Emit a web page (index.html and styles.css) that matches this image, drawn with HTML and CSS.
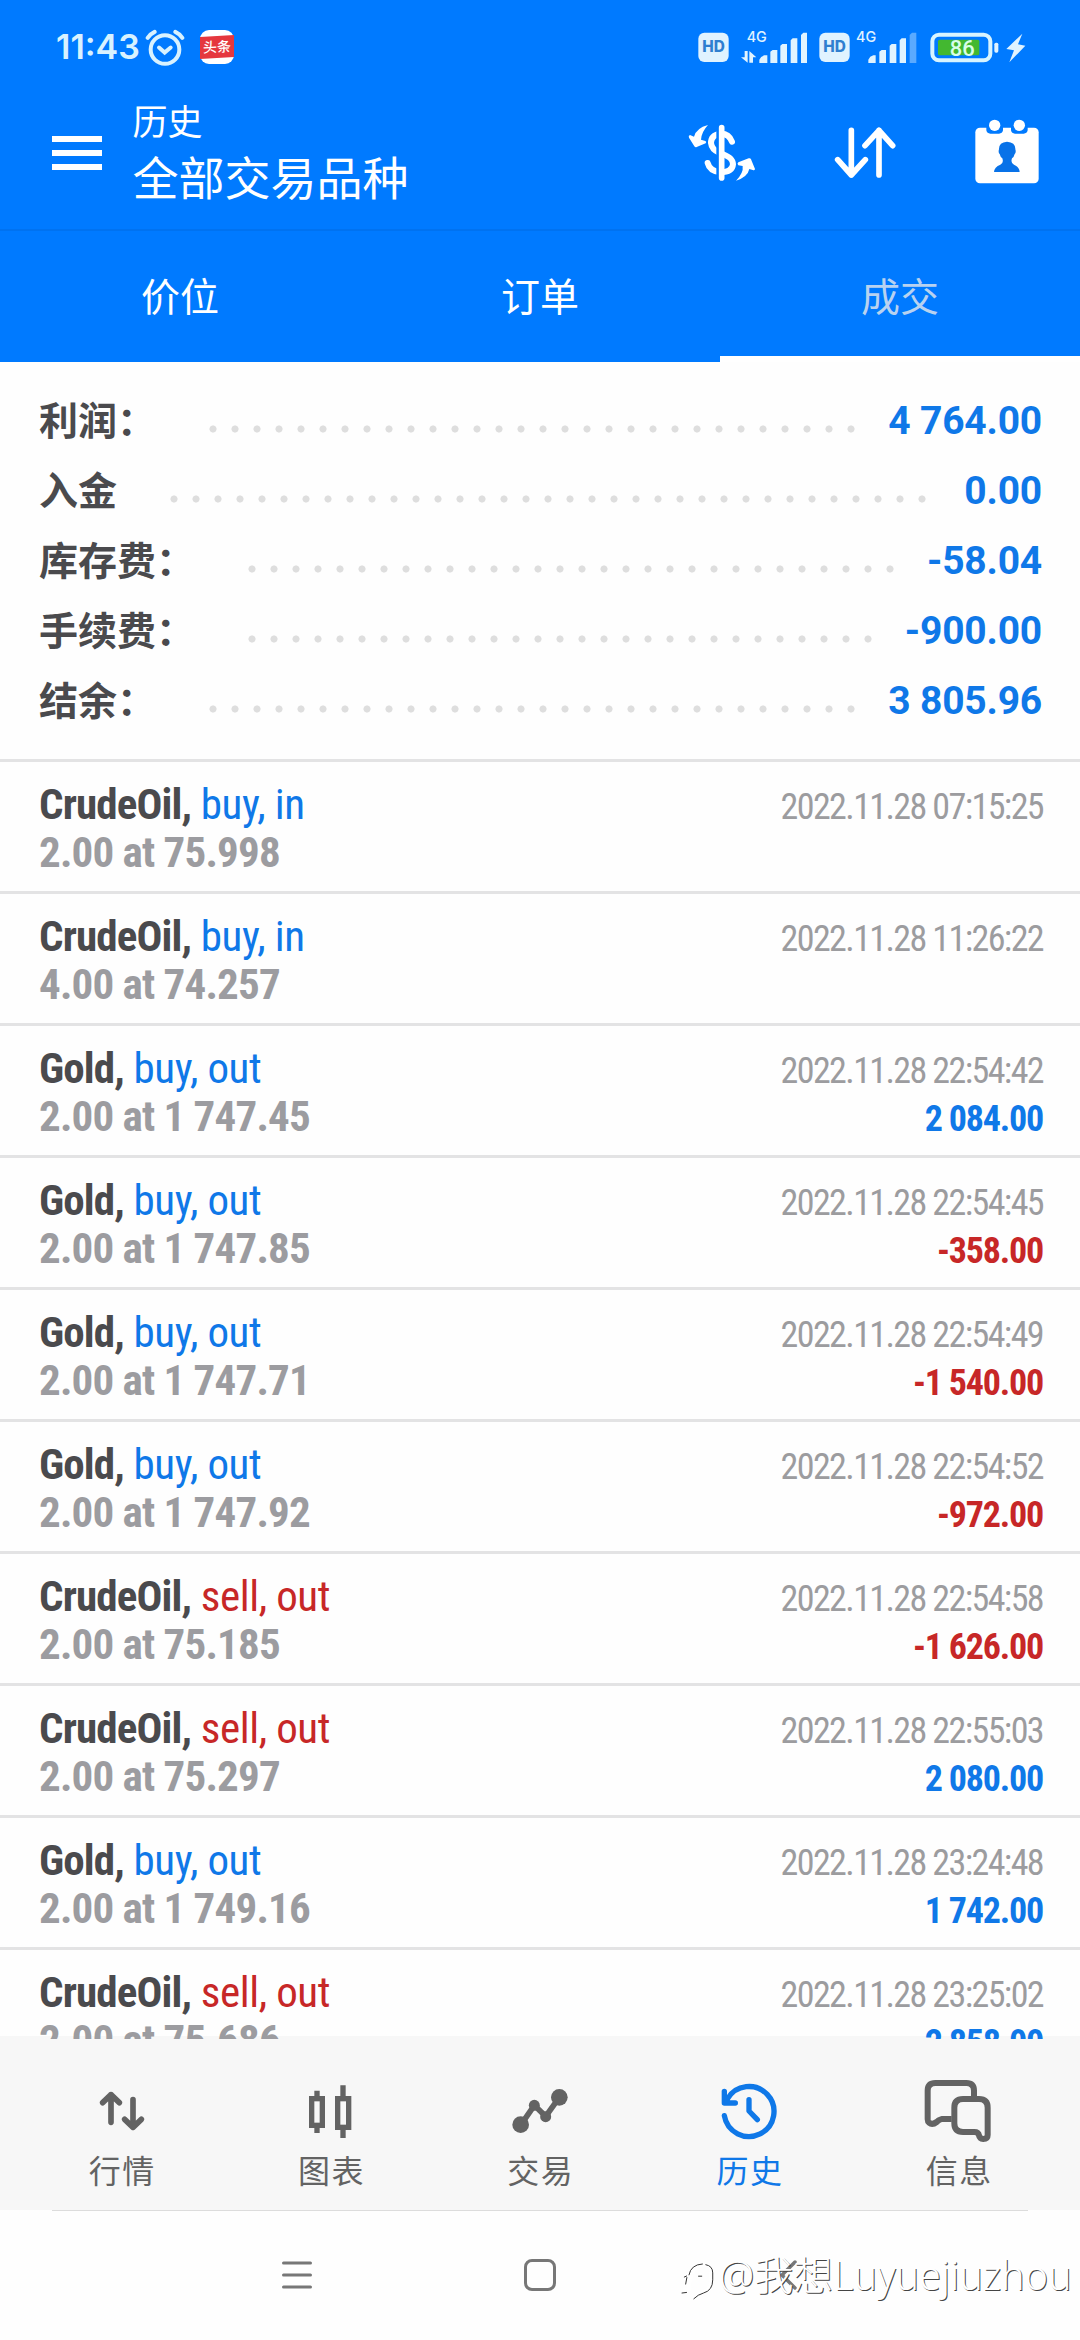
FILE: index.html
```html
<!DOCTYPE html>
<html lang="zh-CN">
<head>
<meta charset="utf-8">
<title>历史</title>
<link rel="stylesheet" href="styles.css">
</head>
<body>
<div class="screen">
  <header class="header">
    <div class="status">
      <div class="status-left">
        <span class="clock">11:43</span>
        <svg class="alarm" viewBox="0 0 120 110">
          <g fill="none" stroke="#d8f2ff" stroke-width="12" stroke-linecap="round">
            <circle cx="60" cy="61" r="43"/>
            <path d="M42 55L59 70L77 55"/>
            <path d="M8 26Q16 14 29 8M112 26Q104 14 91 8"/>
          </g>
        </svg>
        <span class="news"><span class="news-band">头条</span></span>
      </div>
      <svg class="status-right" viewBox="170 80 990 120">
        <g fill="#e0f3ff">
          <rect x="174" y="97" width="91" height="88" rx="18"/>
          <rect x="537" y="97" width="91" height="88" rx="18"/>
          <text class="net" x="319" y="125">4G</text>
          <text class="net" x="647" y="125">4G</text>
          <path d="M313 152h9v35L302 171h11zM327 187v-35l21 19h-10v16z"/>
          <path d="M357 188v-10q4-10 15-13h9v23zM390 188v-34l7-5h14v39zM420 188v-52l6-5h14v57zM451 188v-68l6-6h14v74zM482 188v-84l7-7h11v91z"/>
          <path d="M684 188v-10q4-10 15-13h7v23zM717 188v-34l7-5h13v39zM748 188v-52l6-5h14v57zM778 188v-68l6-6h13v74z"/>
          <path opacity=".4" d="M808 188v-84l7-7h13v91z"/>
          <rect x="1062" y="127" width="12" height="30" rx="5"/>
          <path d="M1146 100L1098 146L1121 150L1107 186L1155 136L1133 132z"/>
        </g>
        <text class="hd" x="219.500" y="156">HD</text>
        <text class="hd" x="582.500" y="156">HD</text>
        <rect x="876" y="103" width="174" height="77" rx="20" fill="none" stroke="#d8f4ff" stroke-width="12"/>
        <rect x="893" y="118" width="124" height="47" rx="5" fill="#43b830"/>
        <text class="charge" x="966" y="166">86</text>
      </svg>
    </div>
    <div class="toolbar">
      <div class="menu"><i></i><i></i><i></i></div>
      <div class="titles">
        <div class="subtitle">历史</div>
        <div class="title">全部交易品种</div>
      </div>
      <div class="actions">
        <svg class="act-dollar" viewBox="145 355 204 204">
          <path fill="none" stroke="#fff" stroke-width="18" stroke-linecap="round" d="M277 426Q268 401 242 402Q214 406 214 430Q216 450 240 460Q280 472 280 494Q278 518 242 518Q210 514 204 490"/>
          <path stroke="#007aff" stroke-width="8" d="M234 375V545"/>
          <path stroke="#fff" stroke-width="17" stroke-linecap="round" d="M246 384V535"/>
          <path fill="#fff" d="M205 376Q170 385 163 411L151 406Q145 408 148 414L164 440Q167 444 171 442L198 431Q202 427 197 424L184 420Q186 396 205 376ZM289 543Q312 520 309 499L296 497Q291 492 296 488L327 476Q332 474 334 479L346 508Q345 513 339 511L329 508Q324 532 289 543Z"/>
        </svg>
        <svg class="act-sort" viewBox="573 355 204 204">
          <path fill="none" stroke="#fff" stroke-width="17" stroke-linecap="round" stroke-linejoin="round" d="M634 392V526M593 480L634 526L676 480M717 526V392M675 438L717 392L758 438"/>
        </svg>
        <svg class="act-cal" viewBox="998 355 204 204">
          <rect x="1005" y="384" width="190" height="167" rx="14" fill="#fff"/>
          <path fill="#007aff" d="M1038 380h50v12q-2 10-12 10h-26q-10 0-12-10zM1112 380h50v12q-2 10-12 10h-26q-10 0-12-10z"/>
          <circle cx="1063" cy="377" r="17" fill="#fff"/>
          <circle cx="1137" cy="377" r="17" fill="#fff"/>
          <path fill="#0872e8" d="M1061 517Q1062 502 1080 495Q1091 490 1086 476Q1080 472 1078 463Q1073 458 1076 449Q1075 428 1100 426Q1126 428 1125 449Q1128 458 1123 463Q1121 472 1115 476Q1110 490 1121 495Q1137 502 1138 517Z"/>
        </svg>
      </div>
    </div>
    <nav class="tabs">
      <div class="tab">价位</div>
      <div class="tab">订单</div>
      <div class="tab tab-active">成交</div>
    </nav>
  </header>

  <section class="summary">
    <div class="sum-row"><span class="sum-label">利润：</span><span class="dots" style="width:660px"></span><span class="sum-value">4 764.00</span></div>
    <div class="sum-row"><span class="sum-label">入金</span><span class="dots" style="width:770px"></span><span class="sum-value">0.00</span></div>
    <div class="sum-row"><span class="sum-label">库存费：</span><span class="dots" style="width:660px"></span><span class="sum-value">-58.04</span></div>
    <div class="sum-row"><span class="sum-label">手续费：</span><span class="dots" style="width:638px"></span><span class="sum-value">-900.00</span></div>
    <div class="sum-row"><span class="sum-label">结余：</span><span class="dots" style="width:660px"></span><span class="sum-value">3 805.96</span></div>
  </section>

  <main class="deals">
    <article class="deal"><div class="line"><span class="name"><b>CrudeOil,</b> <span class="buy">buy, in</span></span><time>2022.11.28 07:15:25</time></div><div class="line"><span class="vol">2.00 at 75.998</span></div></article>
    <article class="deal"><div class="line"><span class="name"><b>CrudeOil,</b> <span class="buy">buy, in</span></span><time>2022.11.28 11:26:22</time></div><div class="line"><span class="vol">4.00 at 74.257</span></div></article>
    <article class="deal"><div class="line"><span class="name"><b>Gold,</b> <span class="buy">buy, out</span></span><time>2022.11.28 22:54:42</time></div><div class="line"><span class="vol">2.00 at 1 747.45</span><span class="profit buy">2 084.00</span></div></article>
    <article class="deal"><div class="line"><span class="name"><b>Gold,</b> <span class="buy">buy, out</span></span><time>2022.11.28 22:54:45</time></div><div class="line"><span class="vol">2.00 at 1 747.85</span><span class="profit sell">-358.00</span></div></article>
    <article class="deal"><div class="line"><span class="name"><b>Gold,</b> <span class="buy">buy, out</span></span><time>2022.11.28 22:54:49</time></div><div class="line"><span class="vol">2.00 at 1 747.71</span><span class="profit sell">-1 540.00</span></div></article>
    <article class="deal"><div class="line"><span class="name"><b>Gold,</b> <span class="buy">buy, out</span></span><time>2022.11.28 22:54:52</time></div><div class="line"><span class="vol">2.00 at 1 747.92</span><span class="profit sell">-972.00</span></div></article>
    <article class="deal"><div class="line"><span class="name"><b>CrudeOil,</b> <span class="sell">sell, out</span></span><time>2022.11.28 22:54:58</time></div><div class="line"><span class="vol">2.00 at 75.185</span><span class="profit sell">-1 626.00</span></div></article>
    <article class="deal"><div class="line"><span class="name"><b>CrudeOil,</b> <span class="sell">sell, out</span></span><time>2022.11.28 22:55:03</time></div><div class="line"><span class="vol">2.00 at 75.297</span><span class="profit buy">2 080.00</span></div></article>
    <article class="deal"><div class="line"><span class="name"><b>Gold,</b> <span class="buy">buy, out</span></span><time>2022.11.28 23:24:48</time></div><div class="line"><span class="vol">2.00 at 1 749.16</span><span class="profit buy">1 742.00</span></div></article>
    <article class="deal"><div class="line"><span class="name"><b>CrudeOil,</b> <span class="sell">sell, out</span></span><time>2022.11.28 23:25:02</time></div><div class="line"><span class="vol">2.00 at 75.686</span><span class="profit buy">2 858.00</span></div></article>
  </main>

  <nav class="bottom">
    <div class="item">
      <svg viewBox="81 48 210 210"><path fill="none" stroke="#636363" stroke-width="17" stroke-linecap="round" stroke-linejoin="round" d="M153 187V104M128 128L153 104L178 128M219 119V202M194 178L219 202L244 178"/></svg>
      <span>行情</span>
    </div>
    <div class="item">
      <svg viewBox="711 48 210 210"><g fill="none" stroke="#636363" stroke-width="16"><path d="M774 92v20M774 198v21M852 76v36M852 202v32"/><rect x="758" y="116" width="32" height="80"/><rect x="836" y="116" width="33" height="86"/></g></svg>
      <span>图表</span>
    </div>
    <div class="item">
      <svg viewBox="45 48 210 210"><path fill="none" stroke="#636363" stroke-width="17" d="M93 194L133 136L167 169L208 112"/><g fill="#636363"><circle cx="92" cy="194" r="25"/><circle cx="133" cy="136" r="16.500"/><circle cx="167" cy="170" r="16.500"/><circle cx="208" cy="112" r="25"/></g></svg>
      <span>交易</span>
    </div>
    <div class="item item-on">
      <svg viewBox="672 48 210 210"><g fill="none" stroke="#0f78e8" stroke-width="16" stroke-linecap="round" stroke-linejoin="round"><path d="M712 117A75 75 0 1 1 703 167M703 94V129H736M777 119V153L802 179"/></g><path fill="#0f78e8" d="M703 100L725 129H703z"/></svg>
      <span>历史</span>
    </div>
    <div class="item">
      <svg viewBox="760 18 210 210"><g fill="none" stroke="#636363" stroke-width="18" stroke-linejoin="round"><path d="M846 147H816Q806 150 801 156Q788 166 778 158Q774 155 774 148V62Q774 39 797 39H890Q913 39 913 62V87"/><path d="M880 87H928Q954 87 954 113V195Q954 207 941 207Q930 206 928 196Q926 186 914 186H880Q854 186 854 160V113Q854 87 880 87Z"/></g></svg>
      <span>信息</span>
    </div>
  </nav>
  <div class="divider"></div>
  <footer class="sysbar">
    <svg viewBox="0 0 44 44"><path stroke="#777" stroke-width="3" stroke-linecap="round" d="M8.500 10H35.500M8.500 22H35.500M8.500 34H35.500"/></svg>
    <svg viewBox="0 0 44 44"><rect x="7.500" y="7.500" width="29" height="29" rx="6.500" fill="none" stroke="#777" stroke-width="3"/></svg>
    <svg viewBox="0 0 44 44"><path fill="none" stroke="#777" stroke-width="3.500" stroke-linecap="round" d="M34 9L21 22L34 35"/></svg>
  </footer>
  <div class="watermark">
    <svg viewBox="30 570 110 130"><g fill="none" stroke-width="12" stroke="#fff"><path d="M38 668L55 665Q58 600 98 590Q123 588 123 612V638Q123 668 92 676L74 690M42 624L60 618M84 623H96"/></g><path fill="none" stroke="#333" stroke-width="3" d="M34 676L50 674M41 628L50 624M56 622Q62 590 98 588M106 590Q128 594 128 615V636Q128 668 100 676Q84 680 70 694M50 628L46 650M84 625H96"/></svg>
    <span>@我想Luyuejiuzhou</span>
  </div>
</div>
</body>
</html>
```
FILE: styles.css
```css
* { box-sizing: border-box; }

body {
  margin: 0;
  background: #fff;
  font-family: Roboto, "Noto Sans CJK SC", sans-serif;
}

.screen {
  position: relative;
  width: 1080px;
  height: 2340px;
  overflow: hidden;
  display: flex;
  flex-direction: column;
  background: #fefefe;
}

.header {
  height: 362px;
  background: #007aff;
  color: #fff;
}

.status {
  height: 94px;
  display: flex;
  justify-content: space-between;
  padding: 0 53px 0 56px;
}

.status-left {
  display: flex;
  align-items: center;
  height: 94px;
}

.clock {
  width: 84px;
  font: 600 34px/40px Inter, sans-serif;
  color: #d8f2ff;
  white-space: nowrap;
}

.alarm {
  width: 40px;
  height: 37px;
  margin-left: 5px;
}

.news {
  width: 34px;
  height: 34px;
  margin-left: 15px;
  padding-top: 6px;
  border-radius: 9px;
  background: #fff;
}

.news-band {
  display: block;
  height: 22px;
  background: #e5373e;
  font: 500 14px/21px "Noto Sans CJK SC", sans-serif;
  text-align: center;
  transform: skewY(-3deg);
}

.status-right {
  width: 330px;
  height: 40px;
  margin-top: 26.700px;
}

.net { font: 500 43px Inter, sans-serif; }
.hd { font: 800 46px Inter, sans-serif; fill: #2f7fd0; text-anchor: middle; }
.charge { font: 500 66px Roboto, sans-serif; fill: #d8ffe8; text-anchor: middle; }

.toolbar {
  height: 137px;
  display: flex;
  padding: 0 39px 0 52px;
  border-bottom: 2px solid #0072f0;
}

.menu {
  width: 50px;
  height: 34px;
  margin-top: 42px;
  display: flex;
  flex-direction: column;
  justify-content: space-between;
}

.menu i { height: 6px; background: #fff; }

.titles {
  margin-left: 30.500px;
  padding-top: 3px;
  font-family: "Noto Sans CJK SC", sans-serif;
}

.subtitle { font-size: 35px; line-height: 46px; }
.title { font-size: 46px; line-height: 64px; }

.actions {
  margin-left: auto;
  padding-top: 24px;
  display: flex;
  gap: 74.500px;
}

.actions svg { width: 68px; height: 68px; }

.tabs { height: 131px; display: flex; }

.tab {
  flex: 1;
  height: 131px;
  text-align: center;
  font: 400 39px/127px "Noto Sans CJK SC", sans-serif;
}

.tab-active { color: #b8d2f0; border-bottom: 6px solid #fff; }

.summary { height: 397px; padding: 23px 38px 0 39px; }

.sum-row { height: 70px; display: flex; align-items: center; }

.sum-label {
  font: 600 39px/66px "Noto Sans CJK SC", sans-serif;
  height: 70px;
  color: #4a4a4d;
}

.dots {
  height: 22px;
  margin: 17px 0 0 46px;
  background: radial-gradient(circle at center, #dedede 3.200px, transparent 3.900px) 0 0 / 22px 22px;
}

.sum-value {
  margin-left: auto;
  padding-top: 2px;
  font: 700 39px/70px Roboto, sans-serif;
  letter-spacing: -.2px;
  color: #0f78e8;
}

.deals { height: 1280px; overflow: hidden; }

.deal {
  height: 132px;
  border-top: 3px solid #e3e3e4;
  padding: 18px 37px 0 39px;
  font-family: "Roboto Condensed", Roboto, sans-serif;
  font-stretch: 75%;
}

.deal:last-child { background: linear-gradient(transparent 86px, #f7f7f7 86px); }

.line {
  height: 48px;
  display: flex;
  justify-content: space-between;
  align-items: baseline;
  line-height: 48px;
  font-size: 43px;
  white-space: nowrap;
}

.name { letter-spacing: -.4px; color: #4a4a4d; }
.name b { letter-spacing: -.850px; }
.vol { font-weight: 700; color: #9c9ca0; letter-spacing: -.8px; }
time { font-size: 36px; color: #9c9c9f; letter-spacing: -1.600px; }
.profit { font-size: 36px; font-weight: 700; letter-spacing: -1.200px; }
.buy { color: #0f78e8; }
.sell { color: #c72727; }

.bottom {
  height: 171px;
  display: flex;
  padding: 37px 17px 0;
  background: #f7f7f7;
}

.item {
  flex: 1;
  display: flex;
  flex-direction: column;
  align-items: center;
  color: #636363;
  font: 400 32px/46px "Noto Sans CJK SC", sans-serif;
}

.item svg { width: 70px; height: 70px; }
.item span { letter-spacing: 1.500px; margin-right: -1.500px; }
.item-on { color: #0f78e8; }

.divider { height: 1px; margin: 0 52px; background: #dcdcdc; }

.sysbar {
  flex: 1;
  display: flex;
  gap: 199px;
  padding: 42px 0 0 275px;
}

.sysbar svg { width: 44px; height: 44px; }

.watermark {
  position: absolute;
  left: 680px;
  top: 2249px;
  display: flex;
  align-items: center;
  color: #fff;
  font: 300 39.500px/50px "Noto Sans", "Noto Sans CJK SC", sans-serif;
  text-shadow: 1px 1px 0 #444;
  white-space: nowrap;
}

.watermark svg { width: 37px; height: 43px; margin: 9px 2px 0 0; }
```
